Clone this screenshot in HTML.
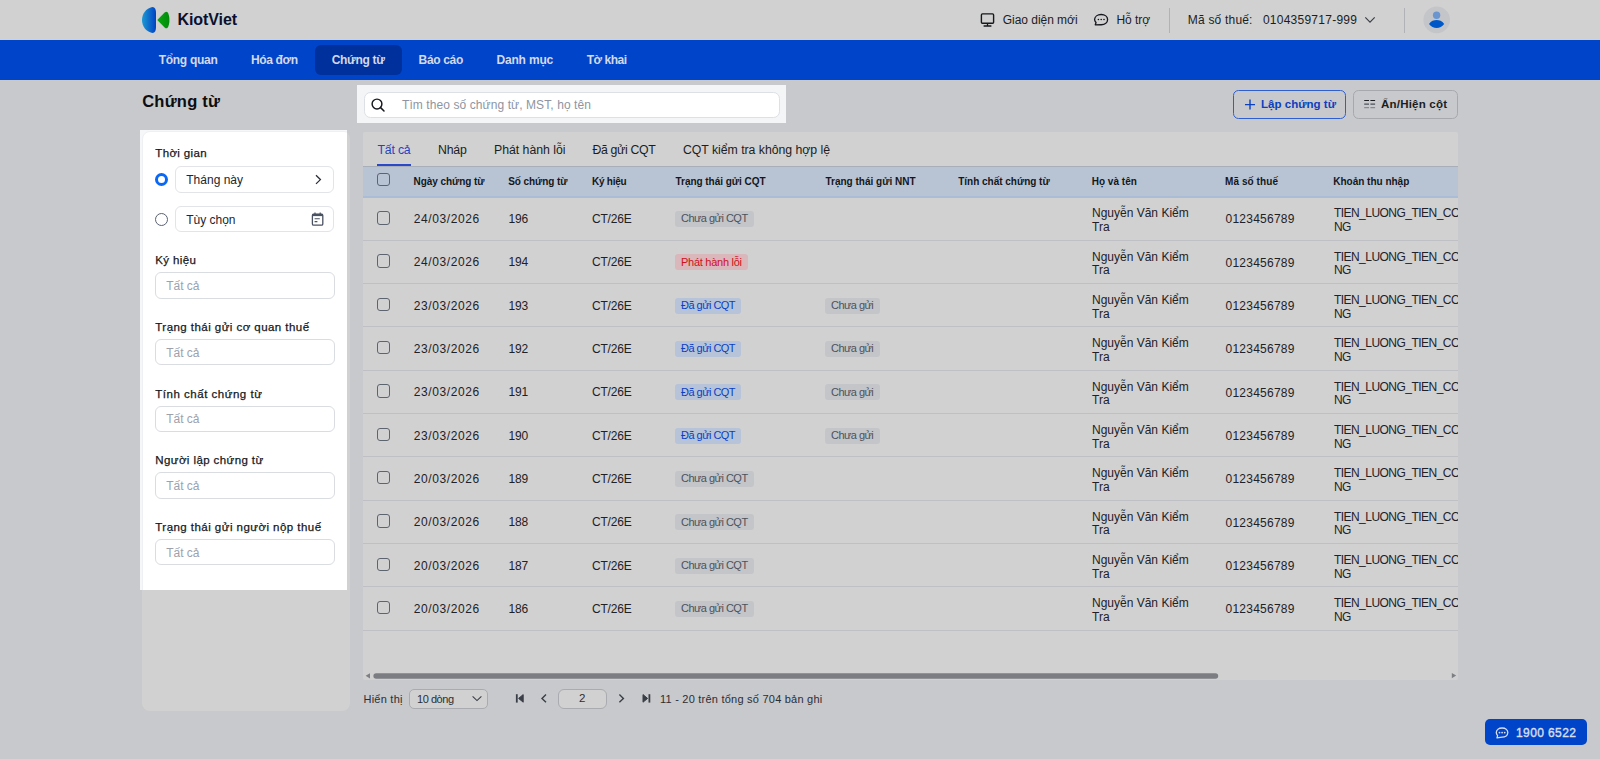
<!DOCTYPE html>
<html><head><meta charset="utf-8">
<style>
*{box-sizing:border-box;margin:0;padding:0}
html,body{width:1600px;height:759px;overflow:hidden;background:#c8c9cc;font-family:"Liberation Sans",sans-serif;position:relative}
.t{position:absolute;white-space:nowrap;line-height:1}
.r{position:absolute}
</style></head><body>
<div class="r" style="left:0px;top:0px;width:1600px;height:40px;background:#d1d1d1;"></div>
<svg class="r" style="left:0;top:0" width="260" height="40" viewBox="0 0 260 40">
<defs><linearGradient id="lg" x1="0" x2="1" y1="0" y2="0"><stop offset="0" stop-color="#1c99d4"/><stop offset="1" stop-color="#0042c4"/></linearGradient></defs>
<path d="M152.3,7 C155.2,7.4 156,9.5 156,13 L156,27 C156,30.5 155.2,32.6 152.3,33 C146,31.5 142,26.5 142,20 C142,13.5 146,8.5 152.3,7 Z" fill="url(#lg)"/>
<defs><linearGradient id="lg2" x1="0" x2="1" y1="0" y2="0"><stop offset="0" stop-color="#09a80f"/><stop offset="1" stop-color="#038a0c"/></linearGradient></defs><path d="M157.3,20 L164.6,12.6 C166.4,11 167.6,11.8 168.3,13.6 C169.2,16 169.4,18 169.4,20 C169.4,22 169.2,24 168.3,26.4 C167.6,28.2 166.4,29 164.6,27.4 Z" fill="url(#lg2)"/>
</svg>
<div class="t" style="left:177.50px;top:11.76px;font-size:16px;font-weight:700;color:#0a1030;letter-spacing:-0.092px;">KiotViet</div>
<svg class="r" style="left:976px;top:8px" width="40" height="24" viewBox="976 8 40 24"><rect x="981.4" y="13.9" width="12.2" height="9.4" rx="1" fill="none" stroke="#15181d" stroke-width="1.4"/>
<path d="M987.5,23.6 V25.6 M983.6,26 H991.4" stroke="#15181d" stroke-width="1.3" fill="none"/></svg>
<div class="t" style="left:1002.80px;top:13.54px;font-size:12px;font-weight:400;color:#1b1d22;letter-spacing:-0.040px;">Giao diện mới</div>
<svg class="r" style="left:1090px;top:8px" width="24" height="24" viewBox="1090 8 24 24"><path d="M1095.3,24.8 L1096,22.6 C1095,21.6 1094.6,20.6 1094.6,19.6 C1094.6,16.6 1097.5,14.5 1101.2,14.5 C1104.9,14.5 1107.6,16.6 1107.6,19.6 C1107.6,22.6 1104.9,24.7 1101.2,24.7 L1095.3,24.8 Z" fill="none" stroke="#15181d" stroke-width="1.35" stroke-linejoin="round"/>
<circle cx="1098.4" cy="19.5" r="0.8" fill="#15181d"/><circle cx="1101.2" cy="19.5" r="0.8" fill="#15181d"/><circle cx="1104" cy="19.5" r="0.8" fill="#15181d"/></svg>
<div class="t" style="left:1116.50px;top:13.54px;font-size:12px;font-weight:400;color:#1b1d22;letter-spacing:-0.073px;">Hỗ trợ</div>
<div class="r" style="left:1168.5px;top:7.5px;width:1px;height:25px;background:#b0b2b6;"></div>
<div class="t" style="left:1187.80px;top:13.54px;font-size:12px;font-weight:400;color:#1b1d22;letter-spacing:0.196px;">Mã số thuế:</div>
<div class="t" style="left:1262.90px;top:13.54px;font-size:12px;font-weight:400;color:#1b1d22;letter-spacing:0.251px;">0104359717-999</div>
<svg class="r" style="left:1360px;top:10px" width="20" height="20" viewBox="1360 10 20 20"><path d="M1365.3,17.4 L1370,22.2 L1374.7,17.4" fill="none" stroke="#3c4048" stroke-width="1.2"/></svg>
<div class="r" style="left:1404px;top:7.5px;width:1px;height:25px;background:#b0b2b6;"></div>
<svg class="r" style="left:1420px;top:4px" width="34" height="32" viewBox="1420 4 34 32"><circle cx="1436.7" cy="19.9" r="13.3" fill="#c4c5c9"/>
<circle cx="1436.6" cy="15.3" r="3.7" fill="#6a95cf"/>
<path d="M1429,24 C1431,20.8 1434,20 1436.6,20 C1439.2,20 1442.2,20.8 1444.2,24 C1442.2,27 1439.5,27.9 1436.6,27.9 C1433.7,27.9 1431,27 1429,24 Z" fill="#0058c8"/></svg>
<div class="r" style="left:0px;top:40px;width:1600px;height:40px;background:#0044c9;"></div>
<div class="r" style="left:315px;top:45px;width:86.5px;height:29.5px;background:#00309b;border-radius:6px;"></div>
<div class="t" style="left:158.70px;top:53.94px;font-size:12px;font-weight:700;color:#d5d9e8;letter-spacing:-0.273px;">Tổng quan</div>
<div class="t" style="left:251.00px;top:53.94px;font-size:12px;font-weight:700;color:#d5d9e8;letter-spacing:-0.360px;">Hóa đơn</div>
<div class="t" style="left:331.70px;top:53.94px;font-size:12px;font-weight:700;color:#d5d9e8;letter-spacing:-0.304px;">Chứng từ</div>
<div class="t" style="left:418.60px;top:53.94px;font-size:12px;font-weight:700;color:#d5d9e8;letter-spacing:-0.341px;">Báo cáo</div>
<div class="t" style="left:496.50px;top:53.94px;font-size:12px;font-weight:700;color:#d5d9e8;letter-spacing:-0.184px;">Danh mục</div>
<div class="t" style="left:586.70px;top:53.94px;font-size:12px;font-weight:700;color:#d5d9e8;letter-spacing:-0.460px;">Tờ khai</div>
<div class="r" style="left:0px;top:80px;width:1600px;height:679px;background:#c8c9cc;"></div>
<div class="t" style="left:142.20px;top:93.03px;font-size:16.5px;font-weight:700;color:#0c0e12;letter-spacing:0.232px;">Chứng từ</div>
<div class="r" style="left:1233.2px;top:90.2px;width:113.2px;height:28.5px;background:transparent;border:1px solid #2e5fd2;border-radius:5.5px;"></div>
<svg class="r" style="left:1240px;top:95px" width="20" height="20" viewBox="1240 95 20 20"><path d="M1250,99.6 V109.6 M1245,104.6 H1255" stroke="#0b40c0" stroke-width="1.4" fill="none"/></svg>
<div class="t" style="left:1261.00px;top:99.07px;font-size:11.5px;font-weight:700;color:#0b40c0;letter-spacing:0.018px;">Lập chứng từ</div>
<div class="r" style="left:1353.2px;top:90.2px;width:104.5px;height:28.5px;background:transparent;border:1px solid #a6a8ad;border-radius:5.5px;"></div>
<svg class="r" style="left:1360px;top:95px" width="20" height="20" viewBox="1360 95 20 20"><path d="M1364.2,100.5 H1369 M1370.4,100.5 H1375.1" stroke="#1b1d22" stroke-width="1.2"/><path d="M1364.2,104.1 H1369 M1370.4,104.1 H1375.1" stroke="#4b505a" stroke-width="1.2"/><path d="M1364.2,107.7 H1369 M1370.4,107.7 H1375.1" stroke="#868a92" stroke-width="1.2"/></svg>
<div class="t" style="left:1381.00px;top:99.07px;font-size:11.5px;font-weight:700;color:#1b1d22;letter-spacing:0.207px;">Ẩn/Hiện cột</div>
<div class="r" style="left:141.6px;top:131px;width:208.4px;height:580.3px;background:#d1d1d1;border-radius:8px;"></div>
<div class="r" style="left:363px;top:132px;width:1095.2px;height:548px;background:#d1d1d1;border-radius:2px;"></div>
<div class="t" style="left:377.40px;top:143.79px;font-size:12.3px;font-weight:400;color:#1f45c4;letter-spacing:-0.171px;">Tất cả</div>
<div class="t" style="left:437.90px;top:143.79px;font-size:12.3px;font-weight:400;color:#1b1d22;letter-spacing:-0.133px;">Nháp</div>
<div class="t" style="left:494.00px;top:143.79px;font-size:12.3px;font-weight:400;color:#1b1d22;letter-spacing:-0.024px;">Phát hành lỗi</div>
<div class="t" style="left:592.40px;top:143.79px;font-size:12.3px;font-weight:400;color:#1b1d22;letter-spacing:-0.317px;">Đã gửi CQT</div>
<div class="t" style="left:683.00px;top:143.79px;font-size:12.3px;font-weight:400;color:#1b1d22;letter-spacing:-0.039px;">CQT kiểm tra không hợp lệ</div>
<div class="r" style="left:377px;top:164px;width:34px;height:2px;background:#2b48c8;"></div>
<div class="r" style="left:363px;top:166px;width:1095.2px;height:31px;background:#b8c4d4;"></div>
<div class="r" style="left:363px;top:165.5px;width:1095.2px;height:1px;background:#a9afb9;"></div>
<div class="r" style="left:363px;top:196px;width:1095.2px;height:1.6px;background:#abbcd6;"></div>
<div class="r" style="left:376.7px;top:172.8px;width:13.3px;height:13.5px;background:transparent;border:1.2px solid #5d6470;border-radius:3px;"></div>
<div class="t" style="left:413.60px;top:176.53px;font-size:10px;font-weight:700;color:#14171c;letter-spacing:-0.059px;">Ngày chứng từ</div>
<div class="t" style="left:508.20px;top:176.53px;font-size:10px;font-weight:700;color:#14171c;letter-spacing:-0.073px;">Số chứng từ</div>
<div class="t" style="left:591.90px;top:176.53px;font-size:10px;font-weight:700;color:#14171c;letter-spacing:-0.216px;">Ký hiệu</div>
<div class="t" style="left:675.50px;top:176.53px;font-size:10px;font-weight:700;color:#14171c;letter-spacing:-0.033px;">Trạng thái gửi CQT</div>
<div class="t" style="left:825.50px;top:176.53px;font-size:10px;font-weight:700;color:#14171c;">Trạng thái gửi NNT</div>
<div class="t" style="left:958.20px;top:176.53px;font-size:10px;font-weight:700;color:#14171c;letter-spacing:-0.012px;">Tính chất chứng từ</div>
<div class="t" style="left:1091.70px;top:176.53px;font-size:10px;font-weight:700;color:#14171c;letter-spacing:0.023px;">Họ và tên</div>
<div class="t" style="left:1225.00px;top:176.53px;font-size:10px;font-weight:700;color:#14171c;letter-spacing:0.083px;">Mã số thuế</div>
<div class="t" style="left:1333.20px;top:176.53px;font-size:10px;font-weight:700;color:#14171c;">Khoản thu nhập</div>
<div class="r" style="left:363px;top:197px;width:1095.2px;height:483px;overflow:hidden">
<div class="r" style="left:13.699999999999989px;top:14.0px;width:13.3px;height:13.5px;background:transparent;border:1.2px solid #5d6470;border-radius:3px;"></div>
<div class="t" style="left:50.80px;top:15.84px;font-size:12px;font-weight:400;color:#1e2127;letter-spacing:0.581px;">24/03/2026</div>
<div class="t" style="left:145.60px;top:15.84px;font-size:12px;font-weight:400;color:#1e2127;letter-spacing:-0.260px;">196</div>
<div class="t" style="left:228.90px;top:15.84px;font-size:12px;font-weight:400;color:#1e2127;letter-spacing:-0.174px;">CT/26E</div>
<div class="r" style="left:312.20000000000005px;top:14.0px;width:78.6px;height:16px;background:#c3c5c9;border-radius:3px;"></div>
<div class="t" style="left:318.00px;top:16.29px;font-size:11px;font-weight:400;color:#4d525b;letter-spacing:-0.518px;">Chưa gửi CQT</div>
<div class="t" style="left:729.00px;top:10.24px;font-size:12px;font-weight:400;color:#1e2127;">Nguyễn Văn Kiểm</div>
<div class="t" style="left:729.00px;top:23.94px;font-size:12px;font-weight:400;color:#1e2127;">Tra</div>
<div class="t" style="left:862.50px;top:16.44px;font-size:12px;font-weight:400;color:#1e2127;letter-spacing:0.245px;">0123456789</div>
<div class="t" style="left:970.90px;top:10.24px;font-size:12px;font-weight:400;color:#1e2127;letter-spacing:-0.528px;">TIEN_LUONG_TIEN_CONG</div>
<div class="t" style="left:970.90px;top:23.94px;font-size:12px;font-weight:400;color:#1e2127;letter-spacing:-0.528px;">NG</div>
<div class="r" style="left:0px;top:42.733000000000004px;width:1095.2px;height:1px;background:#bfc0c5;"></div>
<div class="r" style="left:13.699999999999989px;top:57.333px;width:13.3px;height:13.5px;background:transparent;border:1.2px solid #5d6470;border-radius:3px;"></div>
<div class="t" style="left:50.80px;top:59.17px;font-size:12px;font-weight:400;color:#1e2127;letter-spacing:0.581px;">24/03/2026</div>
<div class="t" style="left:145.60px;top:59.17px;font-size:12px;font-weight:400;color:#1e2127;letter-spacing:-0.260px;">194</div>
<div class="t" style="left:228.90px;top:59.17px;font-size:12px;font-weight:400;color:#1e2127;letter-spacing:-0.174px;">CT/26E</div>
<div class="r" style="left:312.20000000000005px;top:57.333px;width:72.8px;height:16px;background:#d9b7ba;border-radius:3px;"></div>
<div class="t" style="left:318.00px;top:59.62px;font-size:11px;font-weight:400;color:#d0101c;letter-spacing:-0.263px;">Phát hành lỗi</div>
<div class="t" style="left:729.00px;top:53.58px;font-size:12px;font-weight:400;color:#1e2127;">Nguyễn Văn Kiểm</div>
<div class="t" style="left:729.00px;top:67.27px;font-size:12px;font-weight:400;color:#1e2127;">Tra</div>
<div class="t" style="left:862.50px;top:59.77px;font-size:12px;font-weight:400;color:#1e2127;letter-spacing:0.245px;">0123456789</div>
<div class="t" style="left:970.90px;top:53.58px;font-size:12px;font-weight:400;color:#1e2127;letter-spacing:-0.528px;">TIEN_LUONG_TIEN_CONG</div>
<div class="t" style="left:970.90px;top:67.27px;font-size:12px;font-weight:400;color:#1e2127;letter-spacing:-0.528px;">NG</div>
<div class="r" style="left:0px;top:86.06599999999997px;width:1095.2px;height:1px;background:#bfc0c5;"></div>
<div class="r" style="left:13.699999999999989px;top:100.666px;width:13.3px;height:13.5px;background:transparent;border:1.2px solid #5d6470;border-radius:3px;"></div>
<div class="t" style="left:50.80px;top:102.51px;font-size:12px;font-weight:400;color:#1e2127;letter-spacing:0.581px;">23/03/2026</div>
<div class="t" style="left:145.60px;top:102.51px;font-size:12px;font-weight:400;color:#1e2127;letter-spacing:-0.260px;">193</div>
<div class="t" style="left:228.90px;top:102.51px;font-size:12px;font-weight:400;color:#1e2127;letter-spacing:-0.174px;">CT/26E</div>
<div class="r" style="left:312.20000000000005px;top:100.666px;width:66.3px;height:16px;background:#b6c3d9;border-radius:3px;"></div>
<div class="t" style="left:318.00px;top:102.95px;font-size:11px;font-weight:400;color:#0b3fc3;letter-spacing:-0.526px;">Đã gửi CQT</div>
<div class="r" style="left:462px;top:100.666px;width:54.7px;height:16px;background:#c3c5c9;border-radius:3px;"></div>
<div class="t" style="left:468.00px;top:102.95px;font-size:11px;font-weight:400;color:#4d525b;letter-spacing:-0.536px;">Chưa gửi</div>
<div class="t" style="left:729.00px;top:96.91px;font-size:12px;font-weight:400;color:#1e2127;">Nguyễn Văn Kiểm</div>
<div class="t" style="left:729.00px;top:110.61px;font-size:12px;font-weight:400;color:#1e2127;">Tra</div>
<div class="t" style="left:862.50px;top:103.11px;font-size:12px;font-weight:400;color:#1e2127;letter-spacing:0.245px;">0123456789</div>
<div class="t" style="left:970.90px;top:96.91px;font-size:12px;font-weight:400;color:#1e2127;letter-spacing:-0.528px;">TIEN_LUONG_TIEN_CONG</div>
<div class="t" style="left:970.90px;top:110.61px;font-size:12px;font-weight:400;color:#1e2127;letter-spacing:-0.528px;">NG</div>
<div class="r" style="left:0px;top:129.399px;width:1095.2px;height:1px;background:#bfc0c5;"></div>
<div class="r" style="left:13.699999999999989px;top:143.99900000000002px;width:13.3px;height:13.5px;background:transparent;border:1.2px solid #5d6470;border-radius:3px;"></div>
<div class="t" style="left:50.80px;top:145.84px;font-size:12px;font-weight:400;color:#1e2127;letter-spacing:0.581px;">23/03/2026</div>
<div class="t" style="left:145.60px;top:145.84px;font-size:12px;font-weight:400;color:#1e2127;letter-spacing:-0.260px;">192</div>
<div class="t" style="left:228.90px;top:145.84px;font-size:12px;font-weight:400;color:#1e2127;letter-spacing:-0.174px;">CT/26E</div>
<div class="r" style="left:312.20000000000005px;top:143.99900000000002px;width:66.3px;height:16px;background:#b6c3d9;border-radius:3px;"></div>
<div class="t" style="left:318.00px;top:146.29px;font-size:11px;font-weight:400;color:#0b3fc3;letter-spacing:-0.526px;">Đã gửi CQT</div>
<div class="r" style="left:462px;top:143.99900000000002px;width:54.7px;height:16px;background:#c3c5c9;border-radius:3px;"></div>
<div class="t" style="left:468.00px;top:146.29px;font-size:11px;font-weight:400;color:#4d525b;letter-spacing:-0.536px;">Chưa gửi</div>
<div class="t" style="left:729.00px;top:140.24px;font-size:12px;font-weight:400;color:#1e2127;">Nguyễn Văn Kiểm</div>
<div class="t" style="left:729.00px;top:153.94px;font-size:12px;font-weight:400;color:#1e2127;">Tra</div>
<div class="t" style="left:862.50px;top:146.44px;font-size:12px;font-weight:400;color:#1e2127;letter-spacing:0.245px;">0123456789</div>
<div class="t" style="left:970.90px;top:140.24px;font-size:12px;font-weight:400;color:#1e2127;letter-spacing:-0.528px;">TIEN_LUONG_TIEN_CONG</div>
<div class="t" style="left:970.90px;top:153.94px;font-size:12px;font-weight:400;color:#1e2127;letter-spacing:-0.528px;">NG</div>
<div class="r" style="left:0px;top:172.73199999999997px;width:1095.2px;height:1px;background:#bfc0c5;"></div>
<div class="r" style="left:13.699999999999989px;top:187.332px;width:13.3px;height:13.5px;background:transparent;border:1.2px solid #5d6470;border-radius:3px;"></div>
<div class="t" style="left:50.80px;top:189.17px;font-size:12px;font-weight:400;color:#1e2127;letter-spacing:0.581px;">23/03/2026</div>
<div class="t" style="left:145.60px;top:189.17px;font-size:12px;font-weight:400;color:#1e2127;letter-spacing:-0.260px;">191</div>
<div class="t" style="left:228.90px;top:189.17px;font-size:12px;font-weight:400;color:#1e2127;letter-spacing:-0.174px;">CT/26E</div>
<div class="r" style="left:312.20000000000005px;top:187.332px;width:66.3px;height:16px;background:#b6c3d9;border-radius:3px;"></div>
<div class="t" style="left:318.00px;top:189.62px;font-size:11px;font-weight:400;color:#0b3fc3;letter-spacing:-0.526px;">Đã gửi CQT</div>
<div class="r" style="left:462px;top:187.332px;width:54.7px;height:16px;background:#c3c5c9;border-radius:3px;"></div>
<div class="t" style="left:468.00px;top:189.62px;font-size:11px;font-weight:400;color:#4d525b;letter-spacing:-0.536px;">Chưa gửi</div>
<div class="t" style="left:729.00px;top:183.57px;font-size:12px;font-weight:400;color:#1e2127;">Nguyễn Văn Kiểm</div>
<div class="t" style="left:729.00px;top:197.27px;font-size:12px;font-weight:400;color:#1e2127;">Tra</div>
<div class="t" style="left:862.50px;top:189.77px;font-size:12px;font-weight:400;color:#1e2127;letter-spacing:0.245px;">0123456789</div>
<div class="t" style="left:970.90px;top:183.57px;font-size:12px;font-weight:400;color:#1e2127;letter-spacing:-0.528px;">TIEN_LUONG_TIEN_CONG</div>
<div class="t" style="left:970.90px;top:197.27px;font-size:12px;font-weight:400;color:#1e2127;letter-spacing:-0.528px;">NG</div>
<div class="r" style="left:0px;top:216.06499999999994px;width:1095.2px;height:1px;background:#bfc0c5;"></div>
<div class="r" style="left:13.699999999999989px;top:230.66499999999996px;width:13.3px;height:13.5px;background:transparent;border:1.2px solid #5d6470;border-radius:3px;"></div>
<div class="t" style="left:50.80px;top:232.51px;font-size:12px;font-weight:400;color:#1e2127;letter-spacing:0.581px;">23/03/2026</div>
<div class="t" style="left:145.60px;top:232.51px;font-size:12px;font-weight:400;color:#1e2127;letter-spacing:-0.260px;">190</div>
<div class="t" style="left:228.90px;top:232.51px;font-size:12px;font-weight:400;color:#1e2127;letter-spacing:-0.174px;">CT/26E</div>
<div class="r" style="left:312.20000000000005px;top:230.66499999999996px;width:66.3px;height:16px;background:#b6c3d9;border-radius:3px;"></div>
<div class="t" style="left:318.00px;top:232.95px;font-size:11px;font-weight:400;color:#0b3fc3;letter-spacing:-0.526px;">Đã gửi CQT</div>
<div class="r" style="left:462px;top:230.66499999999996px;width:54.7px;height:16px;background:#c3c5c9;border-radius:3px;"></div>
<div class="t" style="left:468.00px;top:232.95px;font-size:11px;font-weight:400;color:#4d525b;letter-spacing:-0.536px;">Chưa gửi</div>
<div class="t" style="left:729.00px;top:226.91px;font-size:12px;font-weight:400;color:#1e2127;">Nguyễn Văn Kiểm</div>
<div class="t" style="left:729.00px;top:240.61px;font-size:12px;font-weight:400;color:#1e2127;">Tra</div>
<div class="t" style="left:862.50px;top:233.11px;font-size:12px;font-weight:400;color:#1e2127;letter-spacing:0.245px;">0123456789</div>
<div class="t" style="left:970.90px;top:226.91px;font-size:12px;font-weight:400;color:#1e2127;letter-spacing:-0.528px;">TIEN_LUONG_TIEN_CONG</div>
<div class="t" style="left:970.90px;top:240.61px;font-size:12px;font-weight:400;color:#1e2127;letter-spacing:-0.528px;">NG</div>
<div class="r" style="left:0px;top:259.3979999999999px;width:1095.2px;height:1px;background:#bfc0c5;"></div>
<div class="r" style="left:13.699999999999989px;top:273.998px;width:13.3px;height:13.5px;background:transparent;border:1.2px solid #5d6470;border-radius:3px;"></div>
<div class="t" style="left:50.80px;top:275.84px;font-size:12px;font-weight:400;color:#1e2127;letter-spacing:0.581px;">20/03/2026</div>
<div class="t" style="left:145.60px;top:275.84px;font-size:12px;font-weight:400;color:#1e2127;letter-spacing:-0.260px;">189</div>
<div class="t" style="left:228.90px;top:275.84px;font-size:12px;font-weight:400;color:#1e2127;letter-spacing:-0.174px;">CT/26E</div>
<div class="r" style="left:312.20000000000005px;top:273.998px;width:78.6px;height:16px;background:#c3c5c9;border-radius:3px;"></div>
<div class="t" style="left:318.00px;top:276.29px;font-size:11px;font-weight:400;color:#4d525b;letter-spacing:-0.518px;">Chưa gửi CQT</div>
<div class="t" style="left:729.00px;top:270.24px;font-size:12px;font-weight:400;color:#1e2127;">Nguyễn Văn Kiểm</div>
<div class="t" style="left:729.00px;top:283.94px;font-size:12px;font-weight:400;color:#1e2127;">Tra</div>
<div class="t" style="left:862.50px;top:276.44px;font-size:12px;font-weight:400;color:#1e2127;letter-spacing:0.245px;">0123456789</div>
<div class="t" style="left:970.90px;top:270.24px;font-size:12px;font-weight:400;color:#1e2127;letter-spacing:-0.528px;">TIEN_LUONG_TIEN_CONG</div>
<div class="t" style="left:970.90px;top:283.94px;font-size:12px;font-weight:400;color:#1e2127;letter-spacing:-0.528px;">NG</div>
<div class="r" style="left:0px;top:302.731px;width:1095.2px;height:1px;background:#bfc0c5;"></div>
<div class="r" style="left:13.699999999999989px;top:317.331px;width:13.3px;height:13.5px;background:transparent;border:1.2px solid #5d6470;border-radius:3px;"></div>
<div class="t" style="left:50.80px;top:319.17px;font-size:12px;font-weight:400;color:#1e2127;letter-spacing:0.581px;">20/03/2026</div>
<div class="t" style="left:145.60px;top:319.17px;font-size:12px;font-weight:400;color:#1e2127;letter-spacing:-0.260px;">188</div>
<div class="t" style="left:228.90px;top:319.17px;font-size:12px;font-weight:400;color:#1e2127;letter-spacing:-0.174px;">CT/26E</div>
<div class="r" style="left:312.20000000000005px;top:317.331px;width:78.6px;height:16px;background:#c3c5c9;border-radius:3px;"></div>
<div class="t" style="left:318.00px;top:319.62px;font-size:11px;font-weight:400;color:#4d525b;letter-spacing:-0.518px;">Chưa gửi CQT</div>
<div class="t" style="left:729.00px;top:313.57px;font-size:12px;font-weight:400;color:#1e2127;">Nguyễn Văn Kiểm</div>
<div class="t" style="left:729.00px;top:327.27px;font-size:12px;font-weight:400;color:#1e2127;">Tra</div>
<div class="t" style="left:862.50px;top:319.77px;font-size:12px;font-weight:400;color:#1e2127;letter-spacing:0.245px;">0123456789</div>
<div class="t" style="left:970.90px;top:313.57px;font-size:12px;font-weight:400;color:#1e2127;letter-spacing:-0.528px;">TIEN_LUONG_TIEN_CONG</div>
<div class="t" style="left:970.90px;top:327.27px;font-size:12px;font-weight:400;color:#1e2127;letter-spacing:-0.528px;">NG</div>
<div class="r" style="left:0px;top:346.06399999999996px;width:1095.2px;height:1px;background:#bfc0c5;"></div>
<div class="r" style="left:13.699999999999989px;top:360.664px;width:13.3px;height:13.5px;background:transparent;border:1.2px solid #5d6470;border-radius:3px;"></div>
<div class="t" style="left:50.80px;top:362.51px;font-size:12px;font-weight:400;color:#1e2127;letter-spacing:0.581px;">20/03/2026</div>
<div class="t" style="left:145.60px;top:362.51px;font-size:12px;font-weight:400;color:#1e2127;letter-spacing:-0.260px;">187</div>
<div class="t" style="left:228.90px;top:362.51px;font-size:12px;font-weight:400;color:#1e2127;letter-spacing:-0.174px;">CT/26E</div>
<div class="r" style="left:312.20000000000005px;top:360.664px;width:78.6px;height:16px;background:#c3c5c9;border-radius:3px;"></div>
<div class="t" style="left:318.00px;top:362.95px;font-size:11px;font-weight:400;color:#4d525b;letter-spacing:-0.518px;">Chưa gửi CQT</div>
<div class="t" style="left:729.00px;top:356.91px;font-size:12px;font-weight:400;color:#1e2127;">Nguyễn Văn Kiểm</div>
<div class="t" style="left:729.00px;top:370.61px;font-size:12px;font-weight:400;color:#1e2127;">Tra</div>
<div class="t" style="left:862.50px;top:363.11px;font-size:12px;font-weight:400;color:#1e2127;letter-spacing:0.245px;">0123456789</div>
<div class="t" style="left:970.90px;top:356.91px;font-size:12px;font-weight:400;color:#1e2127;letter-spacing:-0.528px;">TIEN_LUONG_TIEN_CONG</div>
<div class="t" style="left:970.90px;top:370.61px;font-size:12px;font-weight:400;color:#1e2127;letter-spacing:-0.528px;">NG</div>
<div class="r" style="left:0px;top:389.39699999999993px;width:1095.2px;height:1px;background:#bfc0c5;"></div>
<div class="r" style="left:13.699999999999989px;top:403.99699999999996px;width:13.3px;height:13.5px;background:transparent;border:1.2px solid #5d6470;border-radius:3px;"></div>
<div class="t" style="left:50.80px;top:405.84px;font-size:12px;font-weight:400;color:#1e2127;letter-spacing:0.581px;">20/03/2026</div>
<div class="t" style="left:145.60px;top:405.84px;font-size:12px;font-weight:400;color:#1e2127;letter-spacing:-0.260px;">186</div>
<div class="t" style="left:228.90px;top:405.84px;font-size:12px;font-weight:400;color:#1e2127;letter-spacing:-0.174px;">CT/26E</div>
<div class="r" style="left:312.20000000000005px;top:403.99699999999996px;width:78.6px;height:16px;background:#c3c5c9;border-radius:3px;"></div>
<div class="t" style="left:318.00px;top:406.29px;font-size:11px;font-weight:400;color:#4d525b;letter-spacing:-0.518px;">Chưa gửi CQT</div>
<div class="t" style="left:729.00px;top:400.24px;font-size:12px;font-weight:400;color:#1e2127;">Nguyễn Văn Kiểm</div>
<div class="t" style="left:729.00px;top:413.94px;font-size:12px;font-weight:400;color:#1e2127;">Tra</div>
<div class="t" style="left:862.50px;top:406.44px;font-size:12px;font-weight:400;color:#1e2127;letter-spacing:0.245px;">0123456789</div>
<div class="t" style="left:970.90px;top:400.24px;font-size:12px;font-weight:400;color:#1e2127;letter-spacing:-0.528px;">TIEN_LUONG_TIEN_CONG</div>
<div class="t" style="left:970.90px;top:413.94px;font-size:12px;font-weight:400;color:#1e2127;letter-spacing:-0.528px;">NG</div>
<div class="r" style="left:0px;top:432.7299999999999px;width:1095.2px;height:1px;background:#bfc0c5;"></div>
</div>
<svg class="r" style="left:363px;top:668px" width="1096" height="14" viewBox="363 668 1096 14"><path d="M365.6,675.8 L370,673.2 L370,678.4 Z" fill="#7d7f84"/>
<path d="M1456.2,675.6 L1451.8,673 L1451.8,678.2 Z" fill="#7d7f84"/>
<rect x="373.4" y="673.2" width="844.8" height="5.6" rx="2.8" fill="#7b7d82"/></svg>
<div class="t" style="left:363.50px;top:693.69px;font-size:11px;font-weight:400;color:#2a2e35;letter-spacing:0.238px;">Hiển thị</div>
<div class="r" style="left:409.4px;top:689px;width:78.6px;height:19.5px;background:#d1d1d1;border:1px solid #a9abb0;border-radius:5px;"></div>
<div class="t" style="left:417.00px;top:693.69px;font-size:11px;font-weight:400;color:#2a2e35;letter-spacing:-0.452px;">10 dòng</div>
<svg class="r" style="left:400px;top:685px" width="260" height="28" viewBox="400 685 260 28"><path d="M472.6,696.3 L477,700.6 L481.4,696.3" fill="none" stroke="#3a3e46" stroke-width="1.1"/>
<path d="M516.8,694.2 V702.6" stroke="#3a3e46" stroke-width="1.8"/><path d="M523.2,694.6 L518.6,698.4 L523.2,702.2 Z" fill="#3a3e46" stroke="#3a3e46" stroke-width="1" stroke-linejoin="round"/>
<path d="M546,694.6 L542,698.4 L546,702.2" fill="none" stroke="#3a3e46" stroke-width="1.4"/>
<path d="M619.4,694.6 L623.4,698.4 L619.4,702.2" fill="none" stroke="#3a3e46" stroke-width="1.4"/>
<path d="M649.4,694.2 V702.6" stroke="#3a3e46" stroke-width="1.8"/><path d="M643,694.6 L647.6,698.4 L643,702.2 Z" fill="#3a3e46" stroke="#3a3e46" stroke-width="1" stroke-linejoin="round"/></svg>
<div class="r" style="left:557.8px;top:689.4px;width:49.4px;height:19.2px;background:#d1d1d1;border:1px solid #a9abb0;border-radius:6px;"></div>
<div class="t" style="left:578.90px;top:693.27px;font-size:11.5px;font-weight:400;color:#2a2e35;">2</div>
<div class="t" style="left:660.00px;top:693.69px;font-size:11px;font-weight:400;color:#2a2e35;letter-spacing:0.229px;">11 - 20 trên tổng số 704 bản ghi</div>
<div class="r" style="left:1485px;top:719.4px;width:101.6px;height:25.4px;background:#0044c9;border-radius:5px;"></div>
<svg class="r" style="left:1490px;top:722px" width="22" height="20" viewBox="1490 722 22 20"><path d="M1497,737.8 L1497.6,735.6 C1496.7,734.7 1496.3,733.7 1496.3,732.6 C1496.3,729.9 1498.9,728 1502.1,728 C1505.3,728 1507.8,729.9 1507.8,732.6 C1507.8,735.3 1505.3,737.2 1502.1,737.2 L1497,737.8 Z" fill="none" stroke="#d9deec" stroke-width="1.3" stroke-linejoin="round"/>
<circle cx="1499.5" cy="732.6" r="0.9" fill="#d9deec"/><circle cx="1502.1" cy="732.6" r="0.9" fill="#d9deec"/><circle cx="1504.7" cy="732.6" r="0.9" fill="#d9deec"/></svg>
<div class="t" style="left:1516.00px;top:726.64px;font-size:12px;font-weight:400;color:#d9deec;letter-spacing:0.400px;-webkit-text-stroke:0.4px #d9deec;">1900 6522</div>
<div class="r" style="left:357px;top:85px;width:429px;height:38px;background:#f4f5f7;"></div>
<div class="r" style="left:363.5px;top:91.8px;width:416.5px;height:25.8px;background:#ffffff;border:1px solid #dde0e5;border-radius:6.5px;"></div>
<svg class="r" style="left:366px;top:94px" width="22" height="22" viewBox="366 94 22 22"><circle cx="377" cy="104" r="4.9" fill="none" stroke="#15181d" stroke-width="1.45"/>
<path d="M380.6,107.6 L384,111" stroke="#15181d" stroke-width="1.5" stroke-linecap="round"/></svg>
<div class="t" style="left:402.00px;top:98.84px;font-size:12px;font-weight:400;color:#8e95a2;letter-spacing:0.087px;">Tìm theo số chứng từ, MST, họ tên</div>
<div class="r" style="left:140px;top:130px;width:207px;height:460px;background:#f6f7f9;overflow:hidden">
<div class="r" style="left:1.6px;top:1px;width:210px;height:600px;background:#ffffff;border:1px solid #eef0f3;border-radius:8px;"></div>
<div class="t" style="left:15.30px;top:18.27px;font-size:11.5px;font-weight:400;color:#15181d;letter-spacing:0.359px;-webkit-text-stroke:0.25px #15181d;">Thời gian</div>
<div class="r" style="left:15px;top:43.19999999999999px;width:13.2px;height:13.2px;background:#ffffff;border:3.6px solid #0a68f5;border-radius:7px;"></div>
<div class="r" style="left:35.30000000000001px;top:36.30000000000001px;width:159.2px;height:26.5px;background:#ffffff;border:1px solid #e2e4e8;border-radius:6px;"></div>
<div class="t" style="left:46.20px;top:43.64px;font-size:12px;font-weight:400;color:#22262d;letter-spacing:0.022px;">Tháng này</div>
<div class="r" style="left:15px;top:83.19999999999999px;width:13.2px;height:13.2px;background:#ffffff;border:1px solid #5a6170;border-radius:7px;"></div>
<div class="r" style="left:35.30000000000001px;top:76.30000000000001px;width:159.2px;height:26px;background:#ffffff;border:1px solid #e2e4e8;border-radius:6px;"></div>
<div class="t" style="left:46.20px;top:84.14px;font-size:12px;font-weight:400;color:#22262d;">Tùy chọn</div>
<svg class="r" style="left:170px;top:40px" width="30" height="120" viewBox="310 170 30 120">
<path d="M316,175.3 L320.4,179.6 L316,183.9" fill="none" stroke="#2b2f36" stroke-width="1.3"/>
<rect x="312.4" y="214.2" width="10.4" height="11" rx="1.3" fill="none" stroke="#4a5160" stroke-width="1.3"/>
<path d="M312.4,215 H322.8" stroke="#4a5160" stroke-width="2.2"/>
<path d="M315,212.6 V214 M320.2,212.6 V214" stroke="#4a5160" stroke-width="1.2"/>
<path d="M314.6,218.7 H319.8 M314.6,221.6 H317.4" stroke="#4a5160" stroke-width="1.1"/>
</svg>
<div class="t" style="left:15.30px;top:125.27px;font-size:11.5px;font-weight:400;color:#15181d;letter-spacing:0.366px;-webkit-text-stroke:0.25px #15181d;">Ký hiệu</div>
<div class="r" style="left:15.300000000000011px;top:142.2px;width:179.4px;height:26.6px;background:#ffffff;border:1px solid #d9dce1;border-radius:6px;"></div>
<div class="t" style="left:26.20px;top:149.84px;font-size:12px;font-weight:400;color:#9ba2ad;letter-spacing:-0.031px;">Tất cả</div>
<div class="t" style="left:15.30px;top:191.94px;font-size:11.5px;font-weight:400;color:#15181d;letter-spacing:0.451px;-webkit-text-stroke:0.25px #15181d;">Trạng thái gửi cơ quan thuế</div>
<div class="r" style="left:15.300000000000011px;top:208.87px;width:179.4px;height:26.6px;background:#ffffff;border:1px solid #d9dce1;border-radius:6px;"></div>
<div class="t" style="left:26.20px;top:216.51px;font-size:12px;font-weight:400;color:#9ba2ad;letter-spacing:-0.031px;">Tất cả</div>
<div class="t" style="left:15.30px;top:258.61px;font-size:11.5px;font-weight:400;color:#15181d;letter-spacing:0.514px;-webkit-text-stroke:0.25px #15181d;">Tính chất chứng từ</div>
<div class="r" style="left:15.300000000000011px;top:275.54px;width:179.4px;height:26.6px;background:#ffffff;border:1px solid #d9dce1;border-radius:6px;"></div>
<div class="t" style="left:26.20px;top:283.18px;font-size:12px;font-weight:400;color:#9ba2ad;letter-spacing:-0.031px;">Tất cả</div>
<div class="t" style="left:15.30px;top:325.28px;font-size:11.5px;font-weight:400;color:#15181d;letter-spacing:0.405px;-webkit-text-stroke:0.25px #15181d;">Người lập chứng từ</div>
<div class="r" style="left:15.300000000000011px;top:342.21px;width:179.4px;height:26.6px;background:#ffffff;border:1px solid #d9dce1;border-radius:6px;"></div>
<div class="t" style="left:26.20px;top:349.85px;font-size:12px;font-weight:400;color:#9ba2ad;letter-spacing:-0.031px;">Tất cả</div>
<div class="t" style="left:15.30px;top:391.95px;font-size:11.5px;font-weight:400;color:#15181d;letter-spacing:0.457px;-webkit-text-stroke:0.25px #15181d;">Trạng thái gửi người nộp thuế</div>
<div class="r" style="left:15.300000000000011px;top:408.8800000000001px;width:179.4px;height:26.6px;background:#ffffff;border:1px solid #d9dce1;border-radius:6px;"></div>
<div class="t" style="left:26.20px;top:416.52px;font-size:12px;font-weight:400;color:#9ba2ad;letter-spacing:-0.031px;">Tất cả</div>
</div>
</body></html>
